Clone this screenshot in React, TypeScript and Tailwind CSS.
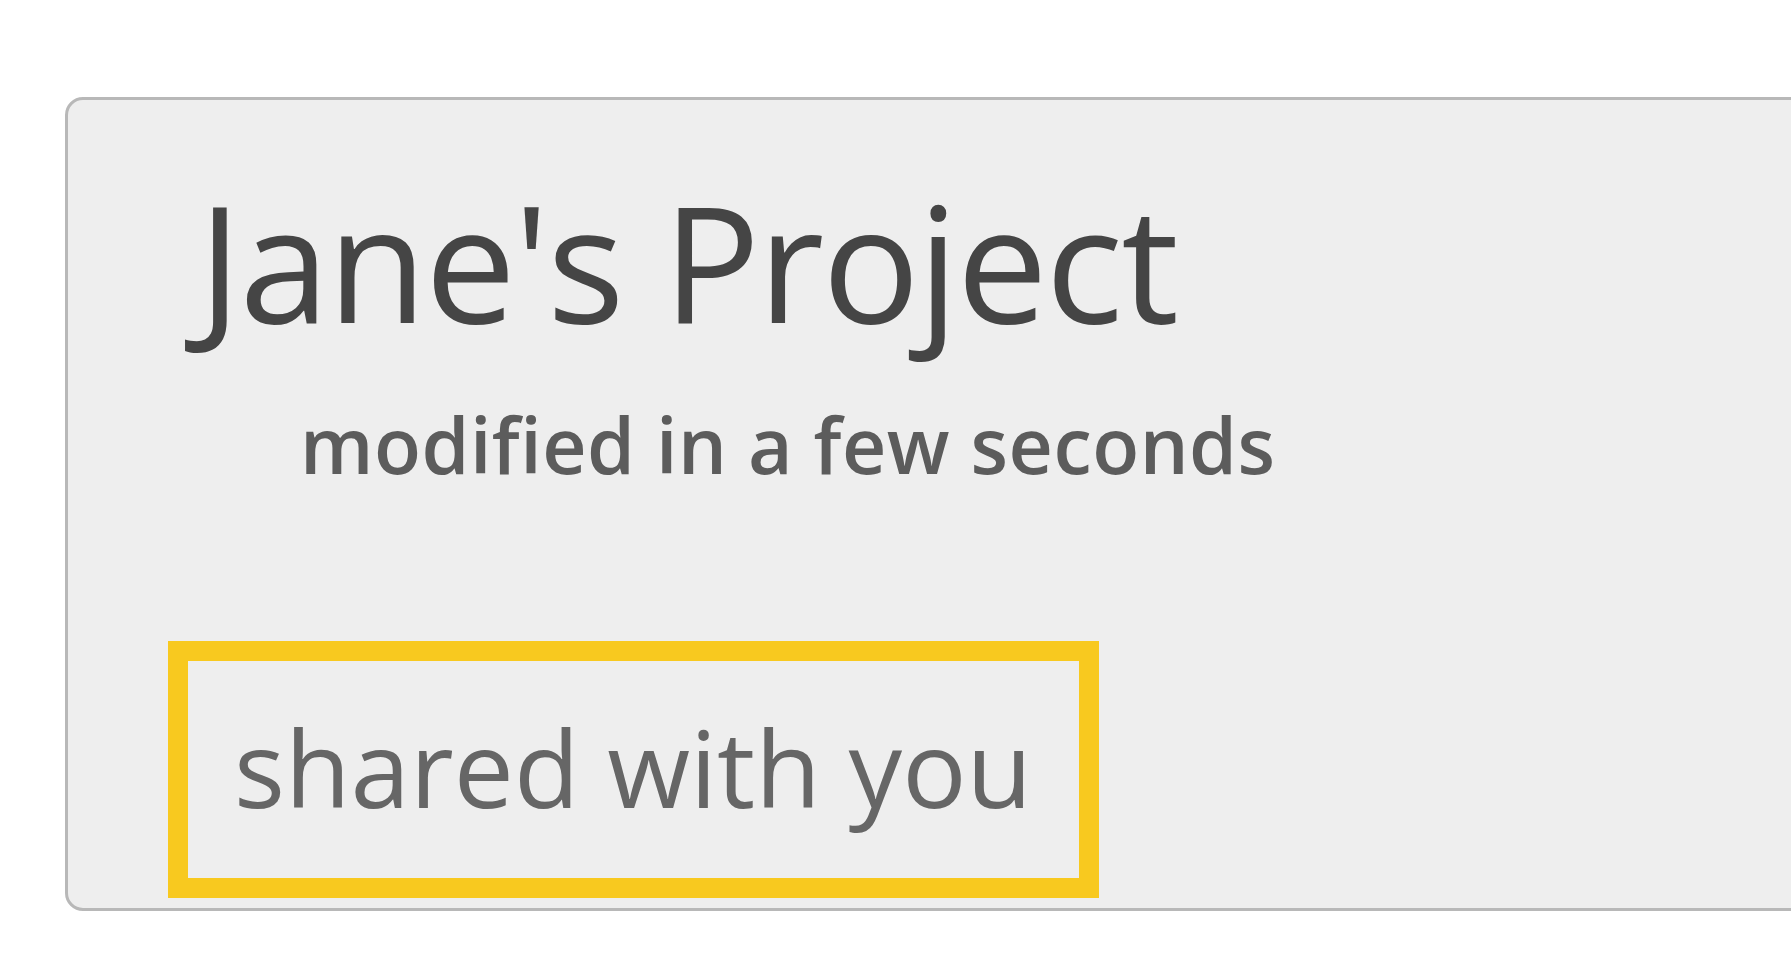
export default function App() {
  return (
    <div className="w-[1791px] h-[968px] overflow-hidden bg-white" style={{ fontFamily: '"Open Sans", sans-serif' }}>
      <div className="ml-[65px] mt-[97px] w-[1780px] h-[814px] rounded-[18px] border-[3px] border-[#b8b8b8] bg-[#eeeeee] flex flex-col">
        <h1 className="ml-[130px] mt-[62px] text-[162px] leading-[196px] text-[#454545] font-normal tracking-[-2px]">
          Jane's Project
        </h1>
        <div className="ml-[232px] mt-[37px] text-[77px] leading-[100px] font-semibold text-[#5c5c5c] tracking-[0.5px]">
          modified in a few seconds
        </div>
        <div className="mt-auto mb-[10px] ml-[100px] self-start border-[20px] border-[#f8c91f] pl-[46px] pr-[47px] h-[257px] flex items-center">
          <span className="text-[107px] leading-none text-[#666666] pb-[6px]">shared with you</span>
        </div>
      </div>
    </div>
  )
}
